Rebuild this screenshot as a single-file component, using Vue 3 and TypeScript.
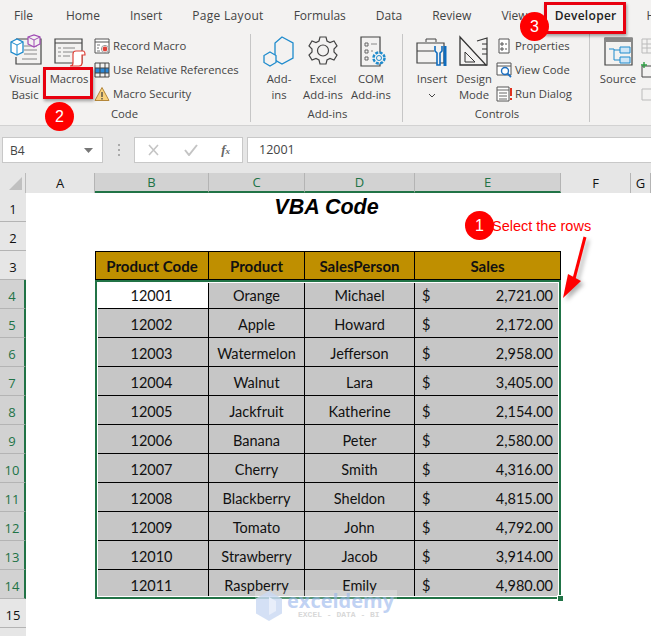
<script setup lang="ts">
interface Sale {
  code: number
  product: string
  person: string
  amount: string
}

const tabs = ['File', 'Home', 'Insert', 'Page Layout', 'Formulas', 'Data', 'Review', 'View', 'Developer', 'Help']
const columns = ['A', 'B', 'C', 'D', 'E', 'F', 'G']
const selectedColumns = ['B', 'C', 'D', 'E']
const rowNumbers = Array.from({ length: 16 }, (_, i) => i + 1)

const sales: Sale[] = [
  { code: 12001, product: 'Orange', person: 'Michael', amount: '2,721.00' },
  { code: 12002, product: 'Apple', person: 'Howard', amount: '2,172.00' },
  { code: 12003, product: 'Watermelon', person: 'Jefferson', amount: '2,958.00' },
  { code: 12004, product: 'Walnut', person: 'Lara', amount: '3,405.00' },
  { code: 12005, product: 'Jackfruit', person: 'Katherine', amount: '2,154.00' },
  { code: 12006, product: 'Banana', person: 'Peter', amount: '2,580.00' },
  { code: 12007, product: 'Cherry', person: 'Smith', amount: '4,316.00' },
  { code: 12008, product: 'Blackberry', person: 'Sheldon', amount: '4,815.00' },
  { code: 12009, product: 'Tomato', person: 'John', amount: '4,792.00' },
  { code: 12010, product: 'Strawberry', person: 'Jacob', amount: '3,914.00' },
  { code: 12011, product: 'Raspberry', person: 'Emily', amount: '4,980.00' },
]
</script>

<template>
  <div class="app">
    <nav class="tabs">
      <span v-for="t in tabs" :key="t" class="tab" :class="{ active: t === 'Developer' }">{{ t }}</span>
    </nav>

    <section class="ribbon">
      <div class="group code">
        <div class="group-body">
          <div class="big w40">
            <svg width="34" height="36" viewBox="0 0 34 36" fill="none">
              <path d="M8 5h25v25H8v-7" stroke="#444" stroke-width="1.2" />
              <path d="M16 12h13M16 16h13M16 20h13M14 25h15" stroke="#888" />
              <path d="M3 8l6-3 6 3v10l-6 3-6-3z" fill="#fff" stroke="#1e8bcd" stroke-width="1.3" />
              <path d="M3 8l6 3 6-3M9 11v10" stroke="#1e8bcd" />
              <path d="M20 3l6-2 6 2v7l-6 3-6-3z" fill="#f3f2f1" stroke="#a04bb5" stroke-width="1.2" />
              <path d="M20 3l6 3 6-3M26 6v7" stroke="#a04bb5" />
            </svg>
            <span>Visual</span><span>Basic</span>
          </div>
          <div class="big w48">
            <svg width="34" height="36" viewBox="0 0 34 36" fill="none">
              <path d="M3 5h27v24H3z" stroke="#444" stroke-width="1.2" />
              <path d="M3 9h27" stroke="#444" />
              <path d="M6 14h3M11 14h12M6 18h3M11 18h12M6 22h3M11 22h7" stroke="#888" />
              <path d="M18 32c2 0 3-1 3-3V20c0-2 1-3 3-3h7c2 0 2 2 2 4h-3v8c0 2-1 3-3 3z" fill="#fff" stroke="#e0433a" stroke-width="1.2" />
            </svg>
            <span>Macros</span>
          </div>
          <div class="smalls">
            <div class="small">
              <svg width="16" height="16" viewBox="0 0 16 16" fill="none">
                <path d="M1 1h14v14H1z" fill="#fff" stroke="#555" />
                <path d="M1 4h14" stroke="#555" />
                <path d="M3 7h3M3 10h2M3 13h3" stroke="#777" />
                <circle cx="11" cy="11" r="3.6" fill="#fff" stroke="#999" />
                <circle cx="11" cy="11" r="2.4" fill="#e0433a" />
              </svg>
              Record Macro
            </div>
            <div class="small">
              <svg width="16" height="16" viewBox="0 0 16 16" fill="none">
                <path d="M1 6h14v5H1z" fill="#2b88d8" />
                <path d="M1 1h14v14H1zM1 6h14M1 11h14M6 1v14M11 1v14" stroke="#444" />
              </svg>
              Use Relative References
            </div>
            <div class="small">
              <svg width="16" height="16" viewBox="0 0 16 16" fill="none">
                <path d="M8 1.5L15 14.5H1z" fill="#f7d27e" stroke="#b4873a" />
                <path d="M8 6v5M8 12v1.5" stroke="#444" stroke-width="1.3" />
              </svg>
              Macro Security
            </div>
          </div>
        </div>
        <div class="group-label">Code</div>
      </div>

      <div class="group addins">
        <div class="group-body">
          <div class="big w40">
            <svg width="34" height="36" viewBox="0 0 34 36" fill="none">
              <path d="M20 3l11 6v15l-11 6-7-4V9z" stroke="#1e8bcd" stroke-width="1.3" />
              <path d="M8 18l6 3.500v7L8 32l-6-3.500v-7z" fill="#f3f2f1" stroke="#1e8bcd" stroke-width="1.3" />
            </svg>
            <span>Add-</span><span>ins</span>
          </div>
          <div class="big w48">
            <svg width="34" height="36" viewBox="0 0 34 36" fill="none">
              <path d="M14 3h6l1 4 3 1.500 4-1.500 3 5-3 3v3l3 3-3 5-4-1.500-3 1.500-1 4h-6l-1-4-3-1.500-4 1.500-3-5 3-3v-3l-3-3 3-5 4 1.500 3-1.500z" stroke="#444" stroke-width="1.2" />
              <circle cx="17" cy="16.500" r="5.500" stroke="#444" stroke-width="1.2" />
            </svg>
            <span>Excel</span><span>Add-ins</span>
          </div>
          <div class="big w48">
            <svg width="34" height="36" viewBox="0 0 34 36" fill="none">
              <path d="M7 3h19v29H7z" fill="#f3f2f1" stroke="#444" stroke-width="1.2" />
              <path d="M11 9h3v3h-3zM11 16h3v3h-3zM11 23h3v3h-3z" stroke="#666" />
              <path d="M17 10h6M17 17h2" stroke="#888" />
              <circle cx="25" cy="24" r="5.500" fill="#f3f2f1" stroke="#1e8bcd" stroke-width="2.500" stroke-dasharray="3 1.300" />
              <circle cx="25" cy="24" r="2.500" fill="#f3f2f1" stroke="#1e8bcd" />
            </svg>
            <span>COM</span><span>Add-ins</span>
          </div>
        </div>
        <div class="group-label">Add-ins</div>
      </div>

      <div class="group controls">
        <div class="group-body">
          <div class="big w42">
            <svg width="34" height="36" viewBox="0 0 34 36" fill="none">
              <path d="M11 8V5h10v3" stroke="#444" />
              <path d="M2 9h27v20H2z" fill="#f3f2f1" stroke="#444" stroke-width="1.200" />
              <path d="M2 17h17" stroke="#444" />
              <path d="M20 12v5l2 2v12h3V19l2-2v-5" fill="#f3f2f1" stroke="#0f6cbd" stroke-width="1.600" />
              <path d="M30 12v20" stroke="#0f6cbd" stroke-width="3" />
            </svg>
            <span>Insert</span>
            <svg class="chev" width="8" height="5" viewBox="0 0 8 5" fill="none"><path d="M1 1l3 3 3-3" stroke="#444" /></svg>
          </div>
          <div class="big w42">
            <svg width="34" height="36" viewBox="0 0 34 36" fill="none">
              <path d="M3 3l26 28H3z" stroke="#333" stroke-width="1.300" />
              <path d="M8 18l10 10H8z" stroke="#333" />
              <path d="M20 7l10-3v27h-2" stroke="#333" stroke-width="1.200" />
              <path d="M25 10h5M25 15h5M25 20h5" stroke="#333" />
            </svg>
            <span>Design</span><span>Mode</span>
          </div>
          <div class="smalls">
            <div class="small">
              <svg width="16" height="16" viewBox="0 0 16 16" fill="none">
                <path d="M3 1h10v14H3z" fill="#fff" stroke="#555" />
                <path d="M5 5h2v2H5zM5 10h2v2H5zM9 6h2M9 11h2" stroke="#555" />
              </svg>
              Properties
            </div>
            <div class="small">
              <svg width="16" height="16" viewBox="0 0 16 16" fill="none">
                <path d="M1 1h14v12H1z" fill="#fff" stroke="#555" />
                <path d="M1 4h14" stroke="#555" />
                <circle cx="9" cy="9" r="3.500" fill="#fff" stroke="#1e6fc0" stroke-width="1.400" />
                <path d="M11.500 11.500L15 15" stroke="#1e6fc0" stroke-width="1.800" />
              </svg>
              View Code
            </div>
            <div class="small">
              <svg width="16" height="16" viewBox="0 0 16 16" fill="none">
                <path d="M1 1h12v14H1z" fill="#fff" stroke="#555" />
                <path d="M1 4h12M3 7h8M3 10h8M3 13h8" stroke="#666" />
                <path d="M15 2v8M15 12v2" stroke="#e0301e" stroke-width="2" />
              </svg>
              Run Dialog
            </div>
          </div>
        </div>
        <div class="group-label">Controls</div>
      </div>

      <div class="group xml">
        <div class="group-body">
          <div class="big w40">
            <svg width="34" height="36" viewBox="0 0 34 36" fill="none">
              <path d="M4 4h27v27H4z" fill="#f3f2f1" stroke="#444" stroke-width="1.200" />
              <path d="M4 4h27v4H4z" fill="#888" />
              <path d="M19 13h10v6H19zM19 23h10v6H19z" fill="#cfe6f7" stroke="#1e8bcd" />
              <path d="M8 15h5v11h6M13 16h6" stroke="#1e8bcd" />
            </svg>
            <span>Source</span>
          </div>
          <div class="smalls">
            <div class="small">
              <svg width="16" height="16" viewBox="0 0 16 16" fill="none"><path d="M3 1h12v14H3zM3 6h12M3 10h12M8 1v14" stroke="#bbb" /></svg>
            </div>
            <div class="small">
              <svg width="16" height="16" viewBox="0 0 16 16" fill="none"><path d="M3 4h12v11H3z" stroke="#444" /><path d="M5 0v6M2 3h6" stroke="#2f9e44" stroke-width="1.400" /></svg>
            </div>
            <div class="small">
              <svg width="16" height="16" viewBox="0 0 16 16" fill="none"><path d="M3 3h12v11H3z" stroke="#bbb" /></svg>
            </div>
          </div>
        </div>
      </div>
    </section>

    <div class="formula-bar">
      <div class="name-box">
        <span>B4</span>
        <svg width="9" height="5" viewBox="0 0 9 5"><path d="M0 0h9L4.500 5z" fill="#777" /></svg>
      </div>
      <div class="dots"><i></i><i></i><i></i></div>
      <div class="fx-box">
        <svg width="13" height="12" viewBox="0 0 13 12" fill="none"><path d="M2 1l9 10M11 1L2 11" stroke="#c4c4c4" stroke-width="1.600" /></svg>
        <svg width="14" height="12" viewBox="0 0 14 12" fill="none"><path d="M1 6l4 5 8-10" stroke="#c4c4c4" stroke-width="2" /></svg>
        <span class="fx">f<sub>x</sub></span>
      </div>
      <div class="formula-input">12001</div>
    </div>

    <div class="sheet">
      <div class="corner"><span></span></div>
      <div
        v-for="c in columns"
        :key="c"
        class="col-head"
        :class="{ on: selectedColumns.includes(c) }"
      >{{ c }}</div>

      <div
        v-for="n in rowNumbers"
        :key="n"
        class="row-head"
        :class="{ on: n >= 4 && n <= 14 }"
        :style="{ gridRow: n + 1 }"
      >{{ n }}</div>

      <div class="title">VBA Code</div>

      <div class="th c-b">Product Code</div>
      <div class="th c-c">Product</div>
      <div class="th c-d">SalesPerson</div>
      <div class="th c-e">Sales</div>

      <template v-for="(s, i) in sales" :key="s.code">
        <div class="td c-b" :class="{ active: i === 0 }" :style="{ gridRow: i + 5 }">{{ s.code }}</div>
        <div class="td c-c" :style="{ gridRow: i + 5 }">{{ s.product }}</div>
        <div class="td c-d" :style="{ gridRow: i + 5 }">{{ s.person }}</div>
        <div class="td c-e money" :style="{ gridRow: i + 5 }"><span>$</span><span>{{ s.amount }}</span></div>
      </template>

      <div class="selection"><i></i></div>

      <div class="watermark">
        <svg width="28" height="30" viewBox="0 0 28 30">
          <path d="M14 0l13 7.500v15L14 30 1 22.500v-15z" fill="#c9d8f2" opacity=".8" />
          <path d="M14 6l7 4v10l-7 4z" fill="#e8eefa" />
        </svg>
        <div class="wm-text">
          <b>exceldemy</b>
          <small>EXCEL - DATA - BI</small>
        </div>
      </div>
    </div>

    <!-- annotations drawn on top of the screenshot -->
    <div class="mark box-macros"></div>
    <div class="mark box-dev"></div>
    <div class="badge b1">1</div>
    <div class="badge b2">2</div>
    <div class="badge b3">3</div>
    <div class="note">Select the rows</div>
    <svg class="arrow" width="40" height="70" viewBox="0 0 40 70">
      <path d="M32 3L21 45" stroke="#f00" stroke-width="3" />
      <path d="M10 64l5-24 13 7z" fill="#f00" />
    </svg>
  </div>
</template>

<style>
html,
body {
  margin: 0;
  background: #fff;
  overflow: hidden;
}
</style>

<style scoped>
.app {
  position: relative;
  width: 651px;
  height: 636px;
  overflow: hidden;
  background: #e6e6e6;
  font-family: "Open Sans", "Noto Sans", sans-serif;
  color: #444;
}

.tabs {
  display: flex;
  gap: 30px;
  height: 32px;
  padding: 6px 0 0 14px;
  box-sizing: border-box;
  background: #f3f2f1;
  font-size: 12px;
  line-height: 20px;
  white-space: nowrap;
}

.tab:first-child {
  margin-right: 3px;
}

.tab:nth-child(4) {
  letter-spacing: 0.3px;
}

.tab.active {
  margin-left: -3px;
  color: #222;
  font-weight: 600;
  letter-spacing: 0.3px;
  box-shadow: 0 2px 0 0 #217346;
}

.ribbon {
  display: flex;
  height: 94px;
  background: #f3f2f1;
  border-bottom: 1px solid #d2d2d2;
  box-sizing: border-box;
  font-size: 11.3px;
  line-height: 16px;
  overflow: hidden;
}

.group {
  flex: none;
  display: flex;
  flex-direction: column;
  height: 88px;
  margin-top: 2px;
  box-sizing: border-box;
  border-right: 1px solid #c6c6c6;
}

.code { width: 251px; padding-left: 5px; }
.addins { width: 152px; padding-left: 8px; }
.controls { width: 187px; padding-left: 8px; }
.xml { flex: 1; padding-left: 8px; border-right: 0; }

.group-body {
  display: flex;
  flex: 1;
  min-height: 0;
}

.group-label {
  height: 16px;
  text-align: center;
  line-height: 15px;
  padding-right: 6px;
}

.big {
  flex: none;
  display: flex;
  flex-direction: column;
  align-items: center;
  white-space: nowrap;
}

.big svg {
  margin-bottom: 1px;
}

.big .chev {
  margin: 6px 0 0;
}

.w40 { width: 40px; }
.w42 { width: 42px; }
.w48 { width: 48px; }

.smalls {
  display: flex;
  flex-direction: column;
  margin-left: 1px;
}

.small {
  display: flex;
  align-items: center;
  gap: 3px;
  height: 24px;
  white-space: nowrap;
}

.formula-bar {
  display: flex;
  align-items: stretch;
  height: 26px;
  margin-top: 11px;
  padding-left: 2px;
}

.name-box {
  display: flex;
  align-items: center;
  justify-content: space-between;
  width: 101px;
  padding: 0 9px 0 7px;
  box-sizing: border-box;
  background: #fff;
  border: 1px solid #c8c8c8;
  font-size: 12px;
}

.dots {
  display: flex;
  flex-direction: column;
  justify-content: center;
  gap: 3px;
  width: 31px;
  align-items: center;
}

.dots i {
  width: 2px;
  height: 2px;
  background: #aaa;
}

.fx-box {
  display: flex;
  align-items: center;
  justify-content: space-between;
  width: 109px;
  padding: 0 12px;
  box-sizing: border-box;
  background: #fff;
  border: 1px solid #c8c8c8;
}

.fx {
  font-family: "Liberation Serif", serif;
  font-style: italic;
  font-weight: 700;
  font-size: 13px;
  line-height: 14px;
  color: #666;
}

.fx sub {
  font-size: 9px;
  line-height: 0;
  vertical-align: baseline;
}

.formula-input {
  flex: 1;
  margin-left: 4px;
  padding-left: 11px;
  background: #fff;
  border: 1px solid #c8c8c8;
  border-right: 0;
  font-size: 12.5px;
  line-height: 24px;
}

.sheet {
  position: relative;
  display: grid;
  grid-template-columns: 26px 69px 114px 96px 110px 146px 70px 20px;
  grid-template-rows: 20px repeat(16, 29px);
  margin-top: 10px;
  background: #fff;
  font-family: Lato, "Open Sans", sans-serif;
  font-size: 15px;
  color: #111;
}

.corner {
  position: relative;
  background: #e6e6e6;
  border-right: 1px solid #bbb;
  box-sizing: border-box;
}

.corner span {
  position: absolute;
  right: 3px;
  bottom: 3px;
  border-style: solid;
  border-width: 0 0 13px 13px;
  border-color: transparent transparent #c0c0c0 transparent;
}

.col-head {
  display: flex;
  align-items: center;
  justify-content: center;
  background: #e6e6e6;
  border-right: 1px solid #b4b4b4;
  box-sizing: border-box;
  font-family: "Open Sans", sans-serif;
  font-size: 13px;
}

.col-head.on {
  background: #d2d2d2;
  border-bottom: 2px solid #217346;
  color: #217346;
}

.row-head {
  grid-column: 1;
  display: flex;
  align-items: center;
  justify-content: center;
  padding-top: 3px;
  background: #e6e6e6;
  border-bottom: 1px solid #b4b4b4;
  box-sizing: border-box;
  font-family: "Open Sans", sans-serif;
  font-size: 13px;
}

.row-head.on {
  background: #d2d2d2;
  border-right: 2px solid #217346;
  color: #217346;
}

.title {
  grid-column: 3 / 7;
  grid-row: 2;
  align-self: center;
  padding-right: 3px;
  text-align: center;
  font-family: "Liberation Sans", Arial, sans-serif;
  font-size: 21.5px;
  font-weight: 700;
  font-style: italic;
  color: #000;
}

.th,
.td {
  display: flex;
  align-items: center;
  justify-content: center;
  box-sizing: border-box;
  border-right: 1px solid #000;
  border-bottom: 1px solid #000;
}

.th {
  grid-row: 4;
  padding-top: 1px;
  background: #bf8f00;
  font-weight: 700;
  color: #111;
  border-top: 1px solid #000;
}

.th.c-b { border-left: 1px solid #000; }

.td {
  background: #c6c6c6;
  padding-top: 2px;
  font-size: 14.5px;
}

.c-b { grid-column: 3; }
.c-c { grid-column: 4; }
.c-d { grid-column: 5; }
.c-e { grid-column: 6; }

.td.active {
  background: #fff;
}

.money {
  justify-content: space-between;
  padding: 2px 7px 0 7px;
}

.selection {
  position: absolute;
  left: 95px;
  top: 107px;
  width: 466px;
  height: 319px;
  box-sizing: border-box;
  border: 2px solid #217346;
  box-shadow: inset 0 0 0 1px #fff;
}

.selection i {
  position: absolute;
  right: -4px;
  bottom: -4px;
  width: 5px;
  height: 5px;
  background: #217346;
  outline: 1px solid #fff;
}

.watermark {
  position: absolute;
  left: 255px;
  top: 417px;
  display: flex;
  gap: 4px;
  width: 142px;
  padding-top: 1px;
  background: rgba(255, 255, 255, 0.25);
}

.wm-text {
  display: flex;
  flex-direction: column;
  line-height: 1;
}

.wm-text b {
  font-family: "Open Sans", sans-serif;
  font-size: 20px;
  color: rgba(150, 180, 235, 0.6);
}

.wm-text small {
  padding-left: 11px;
  font-family: "Liberation Mono", monospace;
  font-size: 8px;
  font-weight: 700;
  color: #d8d8d8;
  white-space: nowrap;
}

.mark {
  position: absolute;
  box-sizing: border-box;
  border: 3px solid #e8000f;
  box-shadow: 1px 2px 3px rgba(0, 0, 0, 0.35);
}

.box-macros {
  left: 43px;
  top: 67px;
  width: 50px;
  height: 32px;
}

.box-dev {
  left: 544px;
  top: 2px;
  width: 82px;
  height: 32px;
}

.badge {
  position: absolute;
  width: 29px;
  height: 29px;
  border-radius: 50%;
  background: #f00;
  color: #fff;
  font-family: "Liberation Sans", Arial, sans-serif;
  font-size: 16px;
  line-height: 29px;
  text-align: center;
}

.b1 { left: 465px; top: 211px; }
.b2 { left: 45px; top: 102px; }
.b3 { left: 520px; top: 12px; }

.note {
  position: absolute;
  left: 492px;
  top: 217px;
  font-family: "Liberation Sans", Arial, sans-serif;
  font-size: 14.5px;
  line-height: 18px;
  color: #f00;
}

.arrow {
  position: absolute;
  left: 553px;
  top: 234px;
  filter: drop-shadow(3px 3px 2px rgba(0, 0, 0, 0.3));
}
</style>
